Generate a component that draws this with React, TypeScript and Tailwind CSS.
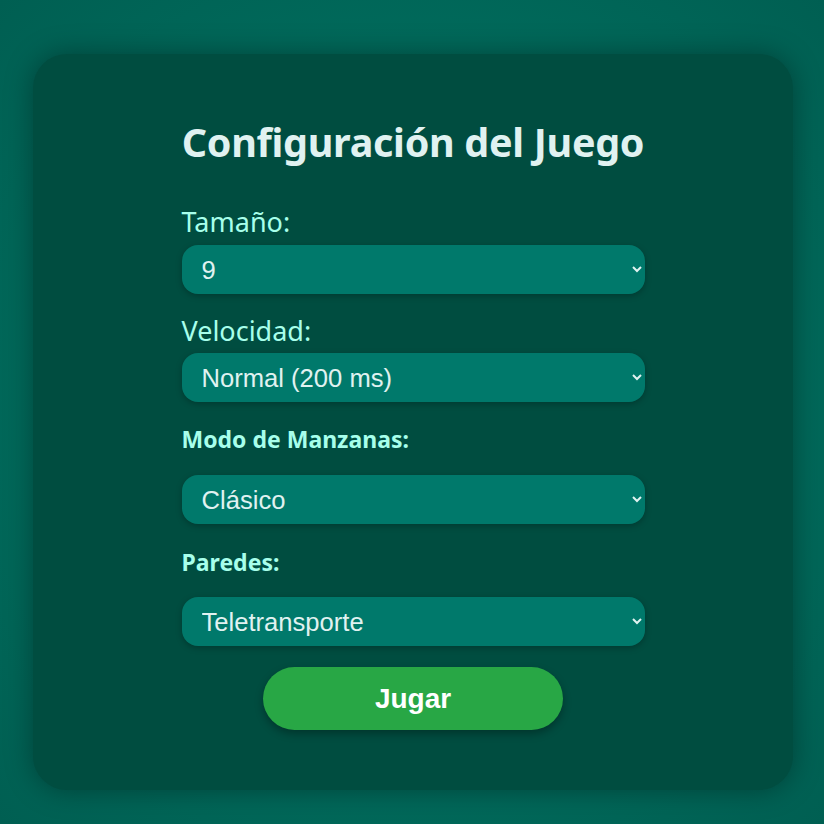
import React, { useState } from "react";

// Configuración del juego: tamaño, velocidad, modo de manzanas y paredes
function App() {
  const [tamano, setTamano] = useState("9");
  const [velocidad, setVelocidad] = useState("200");
  const [modo, setModo] = useState("clasico");
  const [paredes, setParedes] = useState("teletransporte");

  const selectClass =
    "w-full h-[49px] rounded-[16px] bg-[#00796b] text-[#e0f2f1] text-[25.6px] pl-[16px] pr-2 outline-none border-none shadow-[0_2px_6px_rgba(0,0,0,0.25)] [font-family:'Liberation_Sans',Arial,sans-serif]";

  return (
    <div className="min-h-screen w-full flex justify-center items-start pt-[54px] pl-[2px] bg-[radial-gradient(ellipse_at_center,#00725f_0%,#006a5b_60%,#005f52_100%)] [font-family:'Noto_Sans',sans-serif]">
      <div className="w-[760px] h-[736px] rounded-[34px] bg-[#004d40] shadow-[0_0_28px_rgba(0,0,0,0.35)] flex flex-col items-center pt-[64px]">
        <h1 className="text-[39.5px] font-bold text-[#e0f2f1] leading-[48px] tracking-[-0.3px]">
          Configuración del Juego
        </h1>

        <div className="w-[463px] flex flex-col mt-[38px]">
          <label className="text-[27px] text-[#a7ffeb] leading-[36px] mb-[5px]">Tamaño:</label>
          <select className={selectClass} value={tamano} onChange={(e) => setTamano(e.target.value)}>
            <option value="7">7</option>
            <option value="9">9</option>
            <option value="11">11</option>
          </select>

          <label className="text-[27px] text-[#a7ffeb] leading-[36px] mt-[19px] mb-[4px]">Velocidad:</label>
          <select className={selectClass} value={velocidad} onChange={(e) => setVelocidad(e.target.value)}>
            <option value="300">Lento (300 ms)</option>
            <option value="200">Normal (200 ms)</option>
            <option value="100">Rápido (100 ms)</option>
          </select>

          <label className="text-[23px] text-[#a7ffeb] font-bold leading-[32px] mt-[21px] mb-[20px]">
            Modo de Manzanas:
          </label>
          <select className={selectClass} value={modo} onChange={(e) => setModo(e.target.value)}>
            <option value="clasico">Clásico</option>
            <option value="multiples">Múltiples</option>
          </select>

          <label className="text-[23px] text-[#a7ffeb] font-bold leading-[32px] mt-[22px] mb-[19px]">
            Paredes:
          </label>
          <select className={selectClass} value={paredes} onChange={(e) => setParedes(e.target.value)}>
            <option value="teletransporte">Teletransporte</option>
            <option value="solidas">Sólidas</option>
          </select>
        </div>

        <button className="mt-[21px] w-[300px] h-[63px] rounded-full bg-[#28a745] text-white text-[28px] font-bold shadow-[0_4px_8px_rgba(0,0,0,0.3)] [font-family:'Liberation_Sans',Arial,sans-serif]">
          Jugar
        </button>
      </div>
    </div>
  );
}

export default App;
